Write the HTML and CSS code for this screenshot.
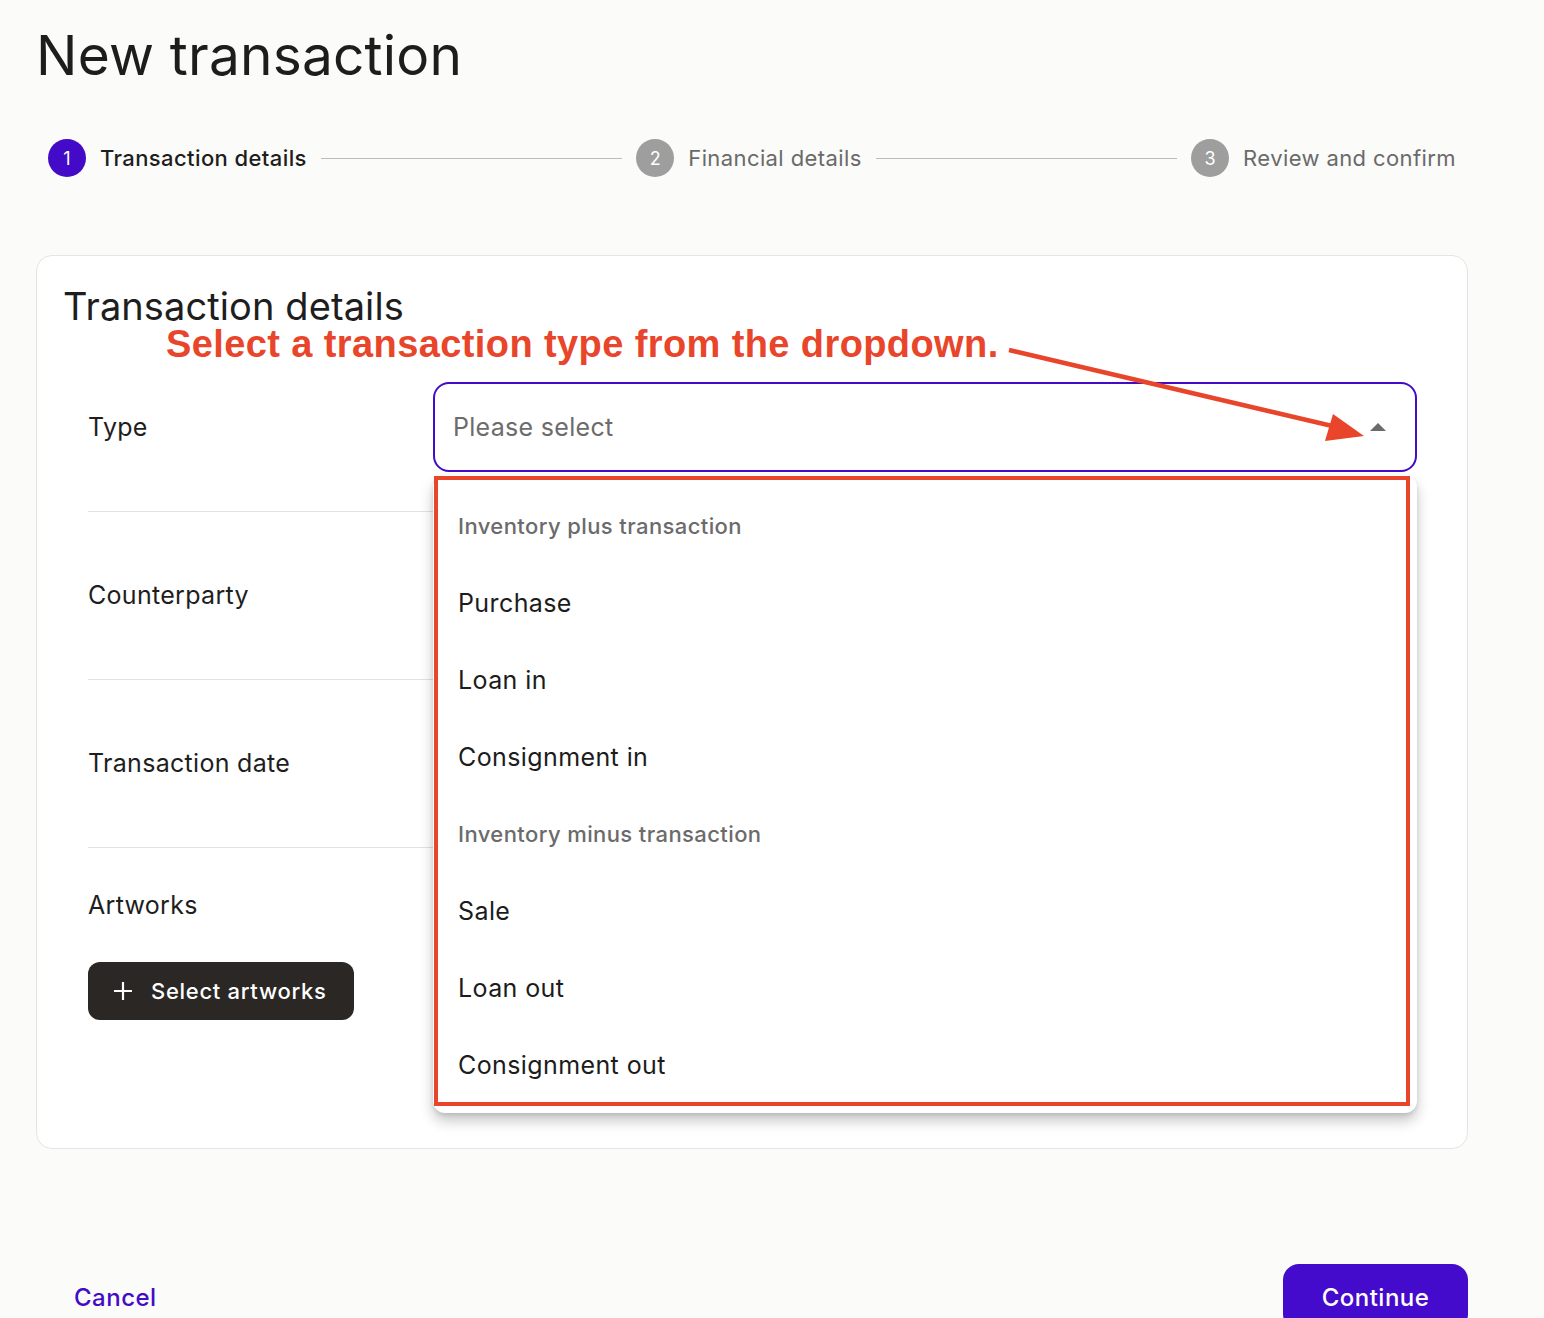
FILE: index.html
```html
<html lang="en">
    <head>
        <meta charset="UTF-8" />
        <meta name="viewport" content="width=device-width, initial-scale=1.0" />
        <title>New transaction</title>
        <link rel="stylesheet" href="styles.css">
    </head>
    <body>
        <div class="page">
            <h1 class="title">New transaction</h1>

            <div class="stepper">
                <div class="step active">
                    <span class="step-num">1</span>
                    <span class="step-label">Transaction details</span>
                </div>
                <div class="step-line"></div>
                <div class="step">
                    <span class="step-num">2</span>
                    <span class="step-label">Financial details</span>
                </div>
                <div class="step-line"></div>
                <div class="step">
                    <span class="step-num">3</span>
                    <span class="step-label">Review and confirm</span>
                </div>
            </div>

            <div class="card">
                <h2 class="card-title">Transaction details</h2>
                <div class="hint">Select a transaction type from the dropdown.</div>

                <div class="form">
                    <div class="row">
                        <label class="row-label">Type</label>
                        <div class="field">
                            <div class="select open">
                                <span class="placeholder">Please select</span>
                                <svg class="caret" width="18" height="10" viewBox="0 0 18 10">
                                    <path d="M1 9 L9 1 L17 9 Z" fill="#6b6b6b" />
                                </svg>
                            </div>
                            <div class="dropdown">
                                <div class="group">Inventory plus transaction</div>
                                <div class="option">Purchase</div>
                                <div class="option">Loan in</div>
                                <div class="option">Consignment in</div>
                                <div class="group">Inventory minus transaction</div>
                                <div class="option">Sale</div>
                                <div class="option">Loan out</div>
                                <div class="option">Consignment out</div>
                                <div class="mark"></div>
                            </div>
                        </div>
                    </div>
                    <div class="row">
                        <label class="row-label">Counterparty</label>
                        <div class="field"></div>
                    </div>
                    <div class="row">
                        <label class="row-label">Transaction date</label>
                        <div class="field"></div>
                    </div>
                    <div class="row stacked">
                        <label class="row-label">Artworks</label>
                        <button class="btn-dark">
                            <svg width="20" height="20" viewBox="0 0 20 20">
                                <path d="M10 1 V19 M1 10 H19" stroke="#fff" stroke-width="2.2" />
                            </svg>
                            Select artworks
                        </button>
                    </div>
                </div>

                <svg class="pointer" width="380" height="100" viewBox="0 0 380 100">
                    <line x1="2" y1="4" x2="338" y2="83" stroke="#e8452b" stroke-width="4.5" />
                    <path d="M326 68 L357 90 L318 95 Z" fill="#e8452b" />
                </svg>
            </div>

            <div class="footer">
                <button class="btn-link">Cancel</button>
                <button class="btn-primary">Continue</button>
            </div>
        </div>
    </body>
</html>
```

FILE: styles.css
```css
* {
    margin: 0;
    padding: 0;
    box-sizing: border-box;
}

html,
body {
    height: 1318px;
    overflow: hidden;
}

body {
    background-color: #fbfbf9;
    font-family: Inter, "Noto Sans", sans-serif;
    color: #1e1e1e;
}

button {
    border: 0;
    outline: 0;
    cursor: pointer;
    font-family: inherit;
}

.page {
    width: 1432px;
    margin-left: 36px;
}

.title {
    font-size: 55px;
    font-weight: 400;
    line-height: 1;
    padding-top: 28px;
    letter-spacing: 0.2px;
    color: #1d1d1d;
}

/* stepper */

.stepper {
    display: flex;
    align-items: center;
    margin-top: 56px;
    margin-left: 12px;
    width: 1408px;
}

.step {
    display: flex;
    align-items: center;
    gap: 14px;
    white-space: nowrap;
}

.step-num {
    display: flex;
    justify-content: center;
    align-items: center;
    width: 38px;
    height: 38px;
    border-radius: 50%;
    background: #9e9e9e;
    color: #fff;
    font-size: 18px;
}

.step-label {
    font-size: 22px;
    letter-spacing: 0.4px;
    color: #6a6a6a;
}

.step.active .step-num {
    background: #430bc8;
}

.step.active .step-label {
    color: #1e1e1e;
    font-weight: 500;
}

.step-line {
    flex: 1;
    height: 1px;
    background: #bdbdbd;
    margin: 0 14px;
}

/* card */

.card {
    position: relative;
    margin-top: 78px;
    background: #fff;
    border: 1px solid #e4e4e2;
    border-radius: 16px;
    padding: 33px 0 128px 26px;
}

.card-title {
    font-size: 38px;
    font-weight: 400;
    line-height: 34px;
    letter-spacing: 0.1px;
}

.hint {
    position: absolute;
    left: 129px;
    top: 72px;
    font-family: "Liberation Sans", Arial, sans-serif;
    font-weight: 700;
    font-size: 38px;
    line-height: 32px;
    letter-spacing: 0.4px;
    color: #e8452b;
}

.pointer {
    position: absolute;
    left: 970px;
    top: 90px;
}

.form {
    margin: 21px 50px 0 25px;
}

.row {
    display: flex;
    align-items: center;
    padding: 38px 0 39px;
    border-bottom: 1px solid #e2e2e2;
}

.row-label {
    width: 345px;
    font-size: 25px;
    letter-spacing: 0.3px;
}

.field {
    position: relative;
    flex: 1;
    height: 90px;
}

.row.stacked {
    flex-direction: column;
    align-items: flex-start;
    padding: 43px 0 0;
    border-bottom: 0;
}

.row.stacked .row-label {
    line-height: 28px;
}

/* select */

.select {
    display: flex;
    justify-content: space-between;
    align-items: center;
    height: 90px;
    padding: 0 28px 0 18px;
    border: 2px solid #d5d5d5;
    border-radius: 16px;
    background: #fff;
}

.select.open {
    border-color: #430bc8;
}

.placeholder {
    font-size: 25px;
    letter-spacing: 0.3px;
    color: #6c6c6c;
}

.dropdown {
    position: absolute;
    top: 93px;
    left: 0;
    right: 0;
    height: 638px;
    padding: 12px 0 10px;
    background: #fff;
    border-radius: 12px;
    box-shadow: 0 8px 14px rgb(0 0 0 / 22%), 0 2px 4px rgb(0 0 0 / 10%);
    z-index: 10;
}

.group,
.option {
    display: flex;
    align-items: center;
    height: 77px;
    padding-left: 25px;
}

.group {
    font-size: 22px;
    font-weight: 500;
    letter-spacing: 0.4px;
    color: #6b6b6b;
}

.option {
    font-size: 25px;
    letter-spacing: 0.4px;
    color: #1c1c1c;
}

/* red frame drawn over the open list */
.mark {
    position: absolute;
    left: 1px;
    top: 1px;
    width: 976px;
    height: 630px;
    border: 4px solid #e8452b;
    pointer-events: none;
}

/* buttons */

.btn-dark {
    display: flex;
    align-items: center;
    gap: 18px;
    margin-top: 43px;
    height: 58px;
    padding: 0 27px 0 25px;
    border-radius: 12px;
    background: #2a2724;
    color: #fff;
    font-size: 22px;
    font-weight: 500;
    letter-spacing: 0.7px;
}

.footer {
    display: flex;
    justify-content: space-between;
    margin-top: 115px;
}

.btn-link {
    height: 66px;
    background: none;
    color: #430bc8;
    font-size: 24px;
    font-weight: 500;
    letter-spacing: 0.5px;
    padding-left: 38px;
}

.btn-primary {
    height: 66px;
    width: 185px;
    border-radius: 16px;
    background: #450bcc;
    color: #fff;
    font-size: 24px;
    font-weight: 500;
    letter-spacing: 0.5px;
}
```
